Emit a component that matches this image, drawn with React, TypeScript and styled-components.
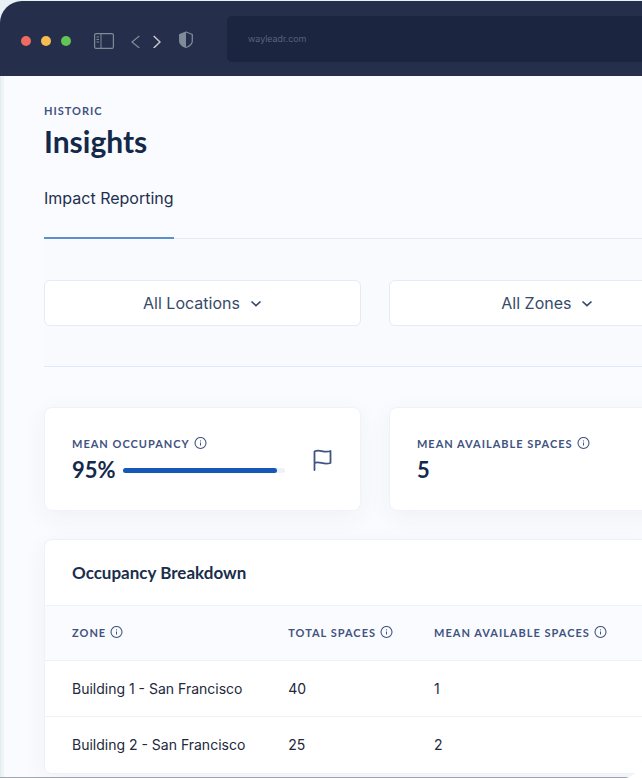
import React from "react";
import styled, { createGlobalStyle } from "styled-components";

const GlobalStyle = createGlobalStyle`
  * { box-sizing: border-box; }
  html { background: linear-gradient(#e9f0f6, #fff 80%); }
  body {
    margin: 0;
    overflow-x: hidden;
    color: #16294a;
    font-family: Inter, "Open Sans", sans-serif;
    font-size: 16px;
  }
  h1, h2, p { margin: 0; }
`;

const Frame = styled.div`
  margin-top: 1px;
  border-radius: 22px 0 22px 0;
  background: #fafbfe;
  overflow: hidden;
`;

const BrowserBar = styled.header`
  display: flex;
  align-items: center;
  height: 75px;
  padding: 4px 0 0 21px;
  background: #252e4a;
`;

const Lights = styled.div`
  display: flex;
  gap: 10px;
  margin-right: 23px;
`;

const Light = styled.span<{ $color: string }>`
  width: 10px;
  height: 10px;
  border-radius: 50%;
  background: ${(p) => p.$color};
`;

const BarButton = styled.button<{ $gap: number }>`
  display: flex;
  margin: 0 ${(p) => p.$gap}px 0 0;
  padding: 0;
  border: 0;
  background: none;
  color: #7e8b98;
`;

const Address = styled.input`
  flex: 1;
  min-width: 0;
  height: 46px;
  margin-bottom: 4px;
  padding: 0 21px;
  border: 0;
  border-radius: 5px 0 0 5px;
  background: #1c2540;
  color: #68718a;
  font: 300 9px Inter, sans-serif;
`;

const Page = styled.main`
  padding: 28px 0 3px 44px;
  border-bottom: 2px solid #a2a7ae;
  background: linear-gradient(90deg, #e0f2df 1px, #eef3fb 1px 4px, transparent 4px);
`;

const Label = styled.span`
  display: flex;
  align-items: center;
  gap: 4px;
  color: #415380;
  font-family: Lato, sans-serif;
  font-size: 11px;
  font-weight: 700;
  line-height: 14px;
  letter-spacing: 1px;
  text-transform: uppercase;
  white-space: nowrap;
`;

const Title = styled.h1`
  margin: 6px 0 22px;
  color: #14294a;
  font-family: Lato, sans-serif;
  font-size: 30px;
  font-weight: 700;
  line-height: 34px;
`;

const Tabs = styled.nav`
  display: flex;
  border-bottom: 1px solid #e4ecf6;
`;

const Tab = styled.a`
  margin-bottom: -1px;
  padding: 8px 0 29px;
  border-bottom: 2px solid #5b8fd0;
  color: #1d3050;
  line-height: 20px;
  text-decoration: none;
`;

const Columns = styled.div`
  display: grid;
  grid-auto-flow: column;
  grid-auto-columns: 53%;
  gap: 28px;
`;

const Filters = styled(Columns)`
  padding: 41px 0 40px;
  border-bottom: 1px solid #dfe9f8;
  background: #f8fafe;
`;

const Filter = styled.label`
  display: flex;
  align-items: center;
  justify-content: center;
  gap: 10px;
  height: 46px;
  border: 1px solid #e3ebf7;
  border-radius: 6px;
  background: #fff;
  color: #354a69;
`;

const Select = styled.select`
  appearance: none;
  field-sizing: content;
  padding: 0;
  border: 0;
  background: none;
  color: inherit;
  font: 16px/20px Inter, sans-serif;
`;

const Cards = styled(Columns)`
  padding: 40px 0 28px;
`;

const Card = styled.section`
  display: flex;
  align-items: center;
  justify-content: space-between;
  height: 104px;
  padding: 2px 28px 0 27px;
  border: 1px solid #eef3fb;
  border-radius: 8px;
  background: #fff;
  box-shadow: 0 6px 24px rgba(40, 60, 100, 0.05);
  color: #415380;
`;

const Metric = styled.div`
  display: flex;
  flex-direction: column;
  gap: 6px;
  width: 213px;
`;

const ValueRow = styled.div`
  display: flex;
  align-items: center;
  gap: 7px;
`;

const Value = styled.strong`
  color: #14294a;
  font-family: Lato, sans-serif;
  font-size: 22px;
  font-weight: 700;
  line-height: 26px;
`;

const Meter = styled.div`
  flex: 1;
  height: 5px;
  border-radius: 3px;
  background: #edf1f9;
`;

const MeterFill = styled.div`
  height: 5px;
  border-radius: 3px;
  background: #1758b5;
`;

const Breakdown = styled.section`
  margin-right: -12px;
  border: 1px solid #edf2f9;
  border-radius: 8px;
  background: #fff;
  box-shadow: 0 6px 24px rgba(40, 60, 100, 0.05);
  overflow: hidden;
`;

const BreakdownTitle = styled.h2`
  padding: 22px 27px;
  color: #1a2e4c;
  font-family: Lato, sans-serif;
  font-size: 17px;
  font-weight: 700;
  line-height: 21px;
`;

const Table = styled.table`
  width: 100%;
  border-collapse: collapse;
  table-layout: fixed;
  text-align: left;
`;

const Head = styled.th<{ $width: string }>`
  width: ${(p) => p.$width};
  height: 55px;
  padding: 0;
  border: solid #edf2f9;
  border-width: 1px 0;
  background: #fafbfe;
  &:first-child { padding-left: 27px; }
`;

const Cell = styled.td`
  height: 56px;
  padding: 0;
  color: #22283c;
  font-size: 14px;
  white-space: nowrap;
  &:first-child { padding-left: 27px; }
  tr + tr > & { border-top: 1px solid #edf2f9; }
`;

const InfoIcon = () => (
  <svg width="13" height="14" viewBox="0 0 13 14" fill="none" stroke="currentColor" aria-hidden="true">
    <circle cx="6.5" cy="6" r="5.5" strokeWidth="1.1" />
    <path d="M6.5 5.5v3M6.5 3.4v1" strokeWidth="1" />
  </svg>
);

const Chevron = () => (
  <svg width="12" height="8" viewBox="0 0 12 8" fill="none" stroke="currentColor" strokeWidth="1.7" aria-hidden="true">
    <path d="m1.5 2.5 4.5 4.2 4.5-4.2" />
  </svg>
);

const filters = [
  ["Location", "All Locations"],
  ["Zone", "All Zones"],
];

const rows = [
  ["Building 1 - San Francisco", 40, 1],
  ["Building 2 - San Francisco", 25, 2],
];

const occupancy = 95;

export default function App() {
  return (
    <>
      <GlobalStyle />
      <Frame>
        <BrowserBar>
          <Lights>
            <Light $color="#ed6b60" />
            <Light $color="#f5bd4f" />
            <Light $color="#61c454" />
          </Lights>
          <BarButton $gap={17} aria-label="Toggle sidebar">
            <svg width="20" height="16" viewBox="0 0 20 16" fill="none" stroke="currentColor">
              <rect x="0.6" y="0.6" width="18.8" height="14.8" rx="1.5" strokeWidth="1.2" />
              <path d="M7 1v14M2.500 4h2.500M2.500 6.500h2.500M2.500 9h2.500" />
            </svg>
          </BarButton>
          <BarButton $gap={13} aria-label="Back">
            <svg width="9" height="14" viewBox="0 0 9 14" fill="none" stroke="currentColor" strokeWidth="1.2">
              <path d="M8.300 2 1 8l7.300 6" />
            </svg>
          </BarButton>
          <BarButton $gap={18} aria-label="Forward">
            <svg width="8" height="14" viewBox="0 0 8 14" fill="none" stroke="#c5c9cc" strokeWidth="1.5">
              <path d="m.7 2 6.300 6-6.300 6" />
            </svg>
          </BarButton>
          <BarButton $gap={34} aria-label="Privacy report">
            <svg width="14" height="20" viewBox="0 0 14 20" fill="none" stroke="currentColor">
              <path d="M7 1 13.300 3.500v6.500c0 3-3 5.200-6.300 6.500C3.700 15.200.7 13 .7 10V3.500z" strokeWidth="1.3" strokeLinejoin="round" />
              <path d="M7 1v15.500C3.700 15.200.7 13 .7 10V3.500z" fill="currentColor" stroke="none" />
            </svg>
          </BarButton>
          <Address aria-label="Address" defaultValue="wayleadr.com" />
        </BrowserBar>
        <Page>
          <Label>Historic</Label>
          <Title>Insights</Title>
          <Tabs>
            <Tab href="#impact">Impact Reporting</Tab>
          </Tabs>
          <Filters>
            {filters.map(([name, option]) => (
              <Filter key={name}>
                <Select aria-label={name}>
                  <option>{option}</option>
                </Select>
                <Chevron />
              </Filter>
            ))}
          </Filters>
          <Cards>
            <Card>
              <Metric>
                <Label>Mean occupancy <InfoIcon /></Label>
                <ValueRow>
                  <Value>{occupancy}%</Value>
                  <Meter role="progressbar" aria-label="Mean occupancy" aria-valuenow={occupancy}>
                    <MeterFill style={{ width: `${occupancy}%` }} />
                  </Meter>
                </ValueRow>
              </Metric>
              <svg width="19" height="22" viewBox="0 0 19 22" fill="none" stroke="currentColor" strokeWidth="1.8" strokeLinecap="round" strokeLinejoin="round" aria-hidden="true">
                <path d="M1.500 21V2.500C7-.5 10 4.500 17.500 2v12C10 16.500 7 11.500 1.500 14" />
              </svg>
            </Card>
            <Card>
              <Metric>
                <Label>Mean available spaces <InfoIcon /></Label>
                <Value>5</Value>
              </Metric>
            </Card>
          </Cards>
          <Breakdown>
            <BreakdownTitle>Occupancy Breakdown</BreakdownTitle>
            <Table>
              <thead>
                <tr>
                  <Head $width="40%"><Label>Zone <InfoIcon /></Label></Head>
                  <Head $width="24%"><Label>Total spaces <InfoIcon /></Label></Head>
                  <Head $width="36%"><Label>Mean available spaces <InfoIcon /></Label></Head>
                </tr>
              </thead>
              <tbody>
                {rows.map((row) => (
                  <tr key={row[0]}>
                    {row.map((value, i) => <Cell key={i}>{value}</Cell>)}
                  </tr>
                ))}
              </tbody>
            </Table>
          </Breakdown>
        </Page>
      </Frame>
    </>
  );
}
